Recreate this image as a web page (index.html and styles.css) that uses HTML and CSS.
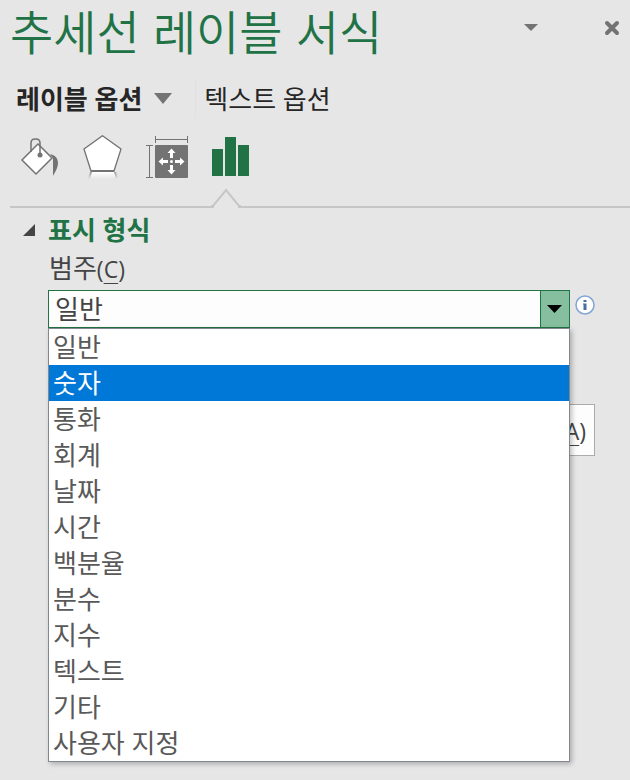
FILE: index.html
```html
<!DOCTYPE html>
<html lang="ko">
<head>
    <meta charset="UTF-8">
    <meta name="viewport" content="width=device-width, initial-scale=1.0">
    <title>추세선 레이블 서식</title>
    <link rel="stylesheet" href="styles.css">
</head>
<body>
    <div class="pane">
        <header class="pane-header">
            <h1>추세선 레이블 서식</h1>
            <button type="button" class="icon-button" aria-label="작업창 옵션">
                <svg width="14" height="8" viewBox="0 0 14 8"><path d="M0 0h14L7 7z" fill="#737373"/></svg>
            </button>
            <button type="button" class="icon-button" aria-label="닫기">
                <svg width="16" height="16" viewBox="0 0 16 16"><path d="M3 3l10 10M13 3L3 13" stroke="#737373" stroke-width="4" stroke-linecap="round"/></svg>
            </button>
        </header>

        <nav class="tabs">
            <button type="button" class="tab active">레이블 옵션
                <svg width="18" height="12" viewBox="0 0 18 12"><path d="M0 0h18L9 11z" fill="#737373"/></svg>
            </button>
            <button type="button" class="tab">텍스트 옵션</button>
        </nav>

        <div class="tools">
            <button type="button" class="tool" aria-label="채우기 및 선">
                <svg width="42" height="48" viewBox="0 0 42 48">
                    <path d="M20 9L34 23L18 39L4 25z" fill="#fff" stroke="#737373" stroke-width="1.5"/>
                    <path d="M13 17V8q0-4 4-4h1q4 0 4 4v11" fill="none" stroke="#737373" stroke-width="1.5"/>
                    <circle cx="22" cy="20" r="2.5" fill="#737373"/>
                    <path d="M32 19c5 1 8 4 8 9c0 5-3 9-5 13V23z" fill="#737373"/>
                </svg>
            </button>
            <button type="button" class="tool" aria-label="효과">
                <svg width="42" height="48" viewBox="0 0 42 48">
                    <defs>
                        <linearGradient id="fade" x1="0" y1="0" x2="0" y2="1">
                            <stop offset="0" stop-color="#fff"/>
                            <stop offset="1" stop-color="#e6e6e6"/>
                        </linearGradient>
                        <linearGradient id="fadeLine" x1="0" y1="0" x2="0" y2="1">
                            <stop offset="0" stop-color="#999"/>
                            <stop offset="1" stop-color="#e6e6e6"/>
                        </linearGradient>
                    </defs>
                    <path d="M9 37h24l3 7H6z" fill="url(#fade)"/>
                    <path d="M8 37h2l-2 7H6zM32 37h2l2 7h-2z" fill="url(#fadeLine)"/>
                    <path d="M20.500 0.700L39 14L32 36H9L2 14z" fill="#fff" stroke="#737373" stroke-width="1.300"/>
                    <path d="M9 36h23" stroke="#737373" stroke-width="2"/>
                </svg>
            </button>
            <button type="button" class="tool" aria-label="크기 및 속성">
                <svg width="42" height="48" viewBox="0 0 42 48">
                    <path d="M9.500 1v7M41.500 1v7M9 4.500h33M0 10.500h7M0 42.500h7M3.500 10v33" stroke="#737373" fill="none"/>
                    <rect x="9" y="10" width="33" height="33" rx="1" fill="#737373"/>
                    <path d="M25.500 13.500l4 4.500h-2.500v5h-3v-5h-2.500zM25.500 39.500l4-4.500h-2.500v-5h-3v5h-2.500zM12.500 26.500l4.500-4v2.500h5v3h-5v2.500zM38.500 26.500l-4.500-4v2.500h-5v3h5v2.500z" fill="#fff"/>
                    <circle cx="25.500" cy="26.500" r="1.500" fill="#fff"/>
                </svg>
            </button>
            <button type="button" class="tool selected" aria-label="레이블 옵션">
                <svg width="42" height="48" viewBox="0 0 42 48">
                    <path d="M2 14h11v27H2zM15 2h11v39H15zM28 10h11v31H28z" fill="#217346"/>
                </svg>
                <svg class="notch" width="30" height="20" viewBox="0 0 30 20">
                    <path d="M3 18h24v2H3z" fill="#e6e6e6"/>
                    <path d="M0 18h2L15 2l13 16h2" fill="#e6e6e6" stroke="#c6c6c6" stroke-width="2"/>
                </svg>
            </button>
        </div>

        <section class="group">
            <h2>
                <svg width="12" height="12" viewBox="0 0 12 12"><path d="M12 0v12H0z" fill="#444"/></svg>
                표시 형식
            </h2>
            <div class="group-body">
                <label class="field-label" for="category">범주<span class="access">(<span class="key">C</span>)</span></label>
                <div class="field-row">
                    <div class="combo">
                        <select id="category">
                            <option selected>일반</option>
                            <option>숫자</option>
                            <option>통화</option>
                            <option>회계</option>
                            <option>날짜</option>
                            <option>시간</option>
                            <option>백분율</option>
                            <option>분수</option>
                            <option>지수</option>
                            <option>텍스트</option>
                            <option>기타</option>
                            <option>사용자 지정</option>
                        </select>
                        <span class="combo-arrow">
                            <svg width="16" height="8" viewBox="0 0 16 8"><path d="M0 0h15L7.500 8z" fill="#000"/></svg>
                        </span>
                        <ul class="menu" role="listbox" aria-label="범주">
                            <li role="option">일반</li>
                            <li role="option" aria-selected="true" class="highlighted">숫자</li>
                            <li role="option">통화</li>
                            <li role="option">회계</li>
                            <li role="option">날짜</li>
                            <li role="option">시간</li>
                            <li role="option">백분율</li>
                            <li role="option">분수</li>
                            <li role="option">지수</li>
                            <li role="option">텍스트</li>
                            <li role="option">기타</li>
                            <li role="option">사용자 지정</li>
                        </ul>
                    </div>
                    <button type="button" class="info" aria-label="정보">
                        <svg width="20" height="20" viewBox="0 0 20 20">
                            <circle cx="10" cy="10" r="9" fill="#fff" stroke="#84a5d3" stroke-width="1.500"/>
                            <path d="M8.500 5h3v2h-3zM8 8.500h3.500V15h-3v-5.500H8z" fill="#44709f"/>
                        </svg>
                    </button>
                </div>
                <div class="actions">
                    <button type="button" class="add"><span class="access">(<span class="key">A</span>)</span></button>
                </div>
            </div>
        </section>
    </div>
</body>
</html>
```

FILE: styles.css
```css
* {
    box-sizing: border-box;
}
body {
    margin: 0;
    background-color: #e6e6e6;
    color: #444;
    font-family: "Open Sans", "Noto Sans CJK KR", sans-serif;
    font-size: 26px;
    line-height: 36px;
}
button {
    padding: 0;
    border: none;
    background: none;
    color: inherit;
    font: inherit;
}
svg {
    display: block;
}
.pane {
    min-height: 100vh;
    padding-left: 10px;
}

/* title */
.pane-header {
    display: flex;
    align-items: center;
    height: 56px;
    padding-right: 10px;
}
.pane-header h1 {
    flex: 1;
    margin: 0;
    padding-top: 4px;
    color: #217346;
    font-family: "Noto Sans CJK KR", sans-serif;
    font-size: 47px;
    font-weight: 350;
    line-height: 56px;
    white-space: nowrap;
}
.icon-button {
    display: flex;
    justify-content: center;
}
.icon-button + .icon-button {
    margin-left: 66px;
}

/* tabs */
.tabs {
    display: flex;
    padding: 23px 0 1px 6px;
    color: #262626;
}
.tab {
    display: flex;
    align-items: center;
    gap: 12px;
    height: 40px;
    white-space: nowrap;
}
.tab.active {
    padding-right: 23px;
    border-right: 1px solid #e1e1e1;
    font-weight: bold;
}
.tab + .tab {
    padding-left: 8px;
}

/* icon row */
.tools {
    display: flex;
    gap: 22px;
    height: 88px;
    padding: 15px 0 0 8px;
    border-bottom: 2px solid #c6c6c6;
}
.tool {
    position: relative;
    height: 48px;
}
.notch {
    position: absolute;
    left: 1px;
    bottom: -25px;
}

/* number format */
.group h2 {
    display: flex;
    align-items: center;
    gap: 13px;
    margin: 0;
    padding: 4px 0 0 13px;
    color: #217346;
    font-size: 26px;
}
.group-body {
    padding: 2px 35px 0 38px;
}
.field-label {
    display: block;
    height: 40px;
    padding-left: 1px;
}
.access {
    font-size: 23px;
}
.key {
    text-decoration: underline;
    text-decoration-thickness: 1px;
    text-underline-offset: 5px;
}
.field-row {
    display: flex;
    gap: 5px;
}
.combo {
    position: relative;
    flex: 1;
}
.combo select {
    display: block;
    width: 100%;
    height: 38px;
    padding: 0 6px;
    border: 1px solid #217346;
    border-radius: 0;
    background-color: #fdfdfd;
    color: #444;
    font: inherit;
    appearance: none;
}
.combo-arrow {
    position: absolute;
    top: 0;
    right: 0;
    display: flex;
    align-items: center;
    justify-content: center;
    width: 30px;
    height: 38px;
    border: 1px solid #217346;
    background-color: #86bfa0;
    pointer-events: none;
}
.menu {
    position: absolute;
    top: 100%;
    left: 0;
    width: 100%;
    margin: 0;
    padding: 0;
    border: 1px solid #828790;
    background-color: #fff;
    box-shadow: 2px 2px 5px rgba(0, 0, 0, 0.25);
    color: #595959;
    list-style: none;
}
.menu li {
    height: 36px;
    padding-left: 4px;
}
.menu .highlighted {
    background-color: #0078d7;
    color: #fff;
}
.info {
    align-self: flex-start;
    margin-top: 5px;
}
.actions {
    display: flex;
    justify-content: flex-end;
    margin-top: 76px;
}
.add {
    width: 96px;
    height: 52px;
    padding-right: 8px;
    border: 1px solid #ababab;
    background-color: #fdfdfd;
    text-align: right;
}
```
